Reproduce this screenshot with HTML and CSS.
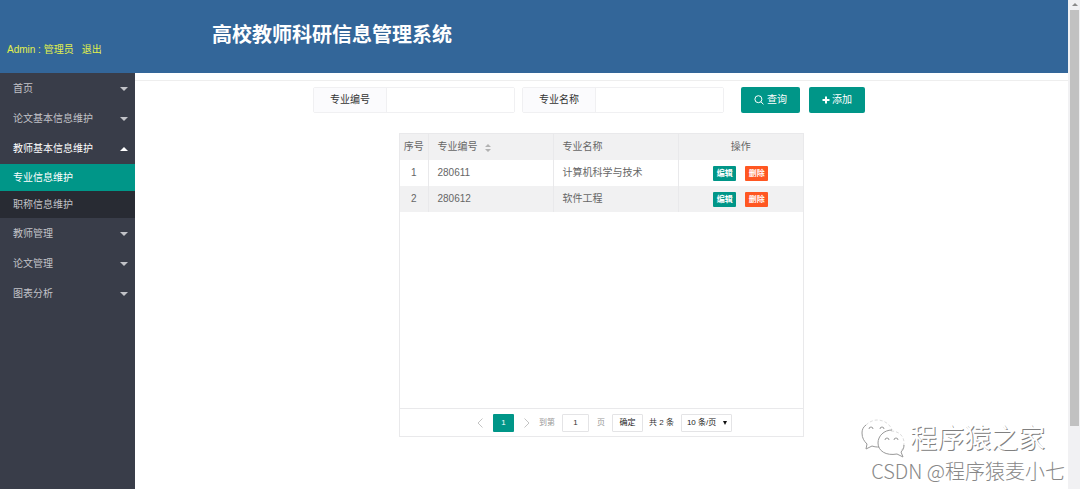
FILE: index.html
```html
<!DOCTYPE html>
<html lang="zh-CN">
<head>
<meta charset="utf-8">
<title>高校教师科研信息管理系统</title>
<link rel="stylesheet" href="styles.css">
</head>
<body>
<div class="window">
  <div class="page">
    <header class="header">
      <div class="user"><span>Admin : 管理员</span><a href="#">退出</a></div>
      <h1 class="title">高校教师科研信息管理系统</h1>
    </header>
    <div class="main">
      <nav class="sidebar">
        <a class="item" href="#">首页<i class="caret"></i></a>
        <a class="item" href="#">论文基本信息维护<i class="caret"></i></a>
        <a class="item open" href="#">教师基本信息维护<i class="caret"></i></a>
        <div class="submenu">
          <a class="subitem active" href="#">专业信息维护</a>
          <a class="subitem" href="#">职称信息维护</a>
        </div>
        <a class="item" href="#">教师管理<i class="caret"></i></a>
        <a class="item" href="#">论文管理<i class="caret"></i></a>
        <a class="item" href="#">图表分析<i class="caret"></i></a>
      </nav>
      <main class="content">
        <form class="search">
          <div class="field"><label for="code">专业编号</label><input id="code" type="text"></div>
          <div class="field"><label for="name">专业名称</label><input id="name" type="text"></div>
          <div class="actions">
            <button class="primary" type="button"><svg class="icon" viewBox="0 0 10 10"><circle cx="4.4" cy="4.2" r="3.5"/><path d="M7 6.800 9.400 9.400"/></svg>查询</button>
            <button class="primary" type="button"><svg class="plus" viewBox="0 0 8 8"><path d="M4 .5v7M.5 4h7"/></svg>添加</button>
          </div>
        </form>
        <section class="panel">
          <div class="rows">
            <table class="table">
              <colgroup><col class="c-index"><col><col><col></colgroup>
              <thead>
                <tr><th class="center">序号</th><th>专业编号<svg class="sort" viewBox="0 0 6 8"><path d="M0 3 3 0l3 3zM0 5l3 3 3-3z"/></svg></th><th>专业名称</th><th class="center">操作</th></tr>
              </thead>
              <tbody>
                <tr><td class="center">1</td><td>280611</td><td>计算机科学与技术</td><td class="center"><div class="ops"><button class="edit" type="button">编辑</button><button class="delete" type="button">删除</button></div></td></tr>
                <tr><td class="center">2</td><td>280612</td><td>软件工程</td><td class="center"><div class="ops"><button class="edit" type="button">编辑</button><button class="delete" type="button">删除</button></div></td></tr>
              </tbody>
            </table>
          </div>
          <div class="pager">
            <button class="arrow" type="button" aria-label="上一页"><svg viewBox="0 0 6 10"><path d="M5.5.5 1 5l4.500 4.500"/></svg></button>
            <button class="current" type="button">1</button>
            <button class="arrow" type="button" aria-label="下一页"><svg viewBox="0 0 6 10"><path d="M.5.5 5 5 .5 9.500"/></svg></button>
            <label class="muted" for="goto">到第</label>
            <input class="goto" id="goto" type="text" value="1">
            <span class="muted">页</span>
            <button class="confirm" type="button">确定</button>
            <span class="total">共 2 条</span>
            <div class="limit"><select aria-label="每页条数"><option>10 条/页</option></select></div>
          </div>
        </section>
      </main>
    </div>
  </div>
  <div class="scrollbar"><i class="scroll-up"></i><i class="thumb"></i></div>
  <div class="watermark">
    <div class="brand">
      <svg class="wechat" viewBox="0 0 46 40">
        <path class="faint" d="M6 6C9 3 13 1 17 1c7 0 13 4 15 10M31 12c8 0 13 5 13 12 0 3-1 6-3 8"/>
        <path class="bold" d="M6 6C3 8 2 11 2 14c0 5 2 8 5 11l-1 5 6-3c3 1 5 1 7 1"/>
        <path class="bold" d="M32 11c-8 0-14 6-14 13 0 8 8 13 19 11l6 3-2-5c2-2 3-4 3-7"/>
        <path class="bold" d="M9 10a2 2 0 0 1 4 0M20 10a2 2 0 0 1 4 0M25 21a2 2 0 0 1 4 0M34 21a2 2 0 0 1 4 0"/>
      </svg>
      <span>程序猿之家</span>
    </div>
    <div class="credit">CSDN @程序猿麦小七</div>
  </div>
</div>
</body>
</html>
```
FILE: styles.css
```css
* { box-sizing: border-box; }

body {
  margin: 0;
  font: 10px/14px "Liberation Sans", "Noto Sans CJK SC", sans-serif;
  color: #666;
  background: #fff;
}

a { color: inherit; text-decoration: none; }

button, input, select { font: inherit; margin: 0; padding: 0; }

.window { position: relative; display: flex; min-height: 100vh; }

.page { flex: 1; display: flex; flex-direction: column; }

.header {
  display: flex;
  height: 73px;
  background: #336699;
}

.user {
  width: 212px;
  padding: 43px 0 0 7px;
  display: flex;
  gap: 8px;
  color: #e2f04c;
}

.title {
  margin: 0;
  padding-top: 21px;
  font-size: 20px;
  line-height: 28px;
  font-weight: 700;
  color: #fff;
}

.main { flex: 1; display: flex; }

.sidebar {
  width: 135px;
  padding-top: 1px;
  background: #393d49;
  color: #c2c3c8;
}

.item {
  display: flex;
  align-items: center;
  justify-content: space-between;
  height: 30px;
  padding: 0 7px 0 13px;
}

.caret {
  border: 4px solid transparent;
  border-top-color: #c2c3c8;
  border-bottom: 0;
}

.open { color: #fff; }

.open .caret {
  border-top: 0;
  border-bottom: 4px solid #fff;
}

.submenu { margin-bottom: 1px; background: #282b33; }

.subitem {
  display: block;
  padding-left: 13px;
  line-height: 27px;
}

.active { background: #009688; color: #fff; }

.content {
  flex: 1;
  display: flex;
  flex-direction: column;
  align-items: center;
  margin-top: 7px;
  border-top: 1px solid #eee;
}

.search {
  display: flex;
  gap: 7px;
  margin-right: 25px;
  padding-top: 6px;
}

.field {
  display: flex;
  height: 26px;
  border: 1px solid #f0f0f2;
  border-radius: 2px;
}

.field label {
  width: 73px;
  line-height: 24px;
  text-align: center;
  color: #333;
  background: #fbfbfd;
  border-right: 1px solid #f0f0f2;
}

.field input {
  width: 127px;
  border: 0;
  padding: 0 7px;
  background: #fff;
}

.actions { display: flex; gap: 9px; margin-left: 10px; }

.primary {
  display: flex;
  align-items: center;
  justify-content: center;
  height: 26px;
  padding: 0 13px;
  border: 0;
  border-radius: 2px;
  color: #fff;
  background: #009688;
}

.icon, .plus { fill: none; stroke: #fff; }
.icon { width: 10px; height: 10px; margin-right: 3px; }
.plus { width: 8px; height: 8px; margin-right: 2px; stroke-width: 2; }

.panel {
  width: 405px;
  margin-top: 20px;
  border: 1px solid #e9e9eb;
}

.rows { min-height: 274px; }

.table {
  width: 100%;
  table-layout: fixed;
  border-collapse: collapse;
}

.c-index { width: 28px; }

th, td {
  height: 26px;
  padding: 0 0 0 9px;
  text-align: left;
  font-weight: 400;
  border-right: 1px solid #e9e9eb;
}

th:last-child, td:last-child { border-right: 0; }

thead tr, tbody tr:nth-child(even) { background: #f1f1f2; }

.center { padding: 0; text-align: center; }

.sort { width: 6px; height: 8px; margin-left: 7px; fill: #b2b2b2; vertical-align: -2px; }

.ops { display: flex; justify-content: center; gap: 9px; }

.edit, .delete {
  width: 23px;
  height: 15px;
  border: 0;
  border-radius: 1px;
  font-size: 8px;
  font-weight: 700;
  line-height: 15px;
  color: #fff;
  background: #009688;
}

.delete { background: #ff5722; }

.pager {
  display: flex;
  align-items: center;
  height: 28px;
  padding-left: 76px;
  border-top: 1px solid #e9e9eb;
  font-size: 8px;
  color: #333;
}

.arrow {
  width: 8px;
  height: 10px;
  border: 0;
  background: none;
  display: flex;
  justify-content: center;
}

.arrow svg { width: 6px; height: 10px; fill: none; stroke: #c4c4c4; }

.current {
  width: 21px;
  height: 18px;
  margin: 0 9px;
  border: 0;
  border-radius: 1px;
  color: #fff;
  background: #009688;
}

.muted { color: #999; }

label.muted { margin-left: 8px; }

.goto {
  width: 27px;
  height: 18px;
  margin: 0 8px 0 7px;
  border: 1px solid #e4e4e6;
  border-radius: 1px;
  text-align: center;
  color: #333;
}

.confirm {
  width: 31px;
  height: 18px;
  margin: 0 6px 0 7px;
  border: 1px solid #e4e4e6;
  border-radius: 1px;
  color: #222;
  background: #fff;
}

.limit { display: flex; position: relative; margin-left: 7px; }

.limit select {
  width: 51px;
  height: 18px;
  padding-left: 5px;
  appearance: none;
  border: 1px solid #e4e4e6;
  border-radius: 1px;
  color: #222;
  background: #fff;
}

.limit::after {
  content: "";
  position: absolute;
  top: 7px;
  right: 5px;
  border: 2px solid transparent;
  border-top: 4px solid #111;
  border-bottom: 0;
  pointer-events: none;
}

.scrollbar {
  width: 12px;
  padding: 3px 1px 0 2px;
  display: flex;
  flex-direction: column;
  align-items: center;
  background: #f1f1f3;
}

.scroll-up {
  border: 3px solid transparent;
  border-top: 0;
  border-bottom-color: #8a8a8a;
}

.thumb {
  width: 100%;
  height: 85vh;
  margin-top: 4px;
  background: #c1c1c1;
}

.watermark {
  position: absolute;
  right: 15px;
  bottom: 6px;
  display: flex;
  flex-direction: column;
  align-items: flex-end;
}

.brand {
  display: flex;
  align-items: center;
  gap: 4px;
  margin-right: 20px;
  font-size: 27px;
  line-height: 36px;
  color: #fff;
  text-shadow: 1px 1px 0 #808080;
}

.wechat { width: 46px; height: 40px; fill: none; }
.faint { stroke: #ddd; stroke-dasharray: 3 2; }
.bold { stroke: #999; }

.credit {
  font-family: "Noto Sans CJK SC", sans-serif;
  font-size: 20px;
  font-weight: 300;
  line-height: 24px;
  color: #888;
}
```
